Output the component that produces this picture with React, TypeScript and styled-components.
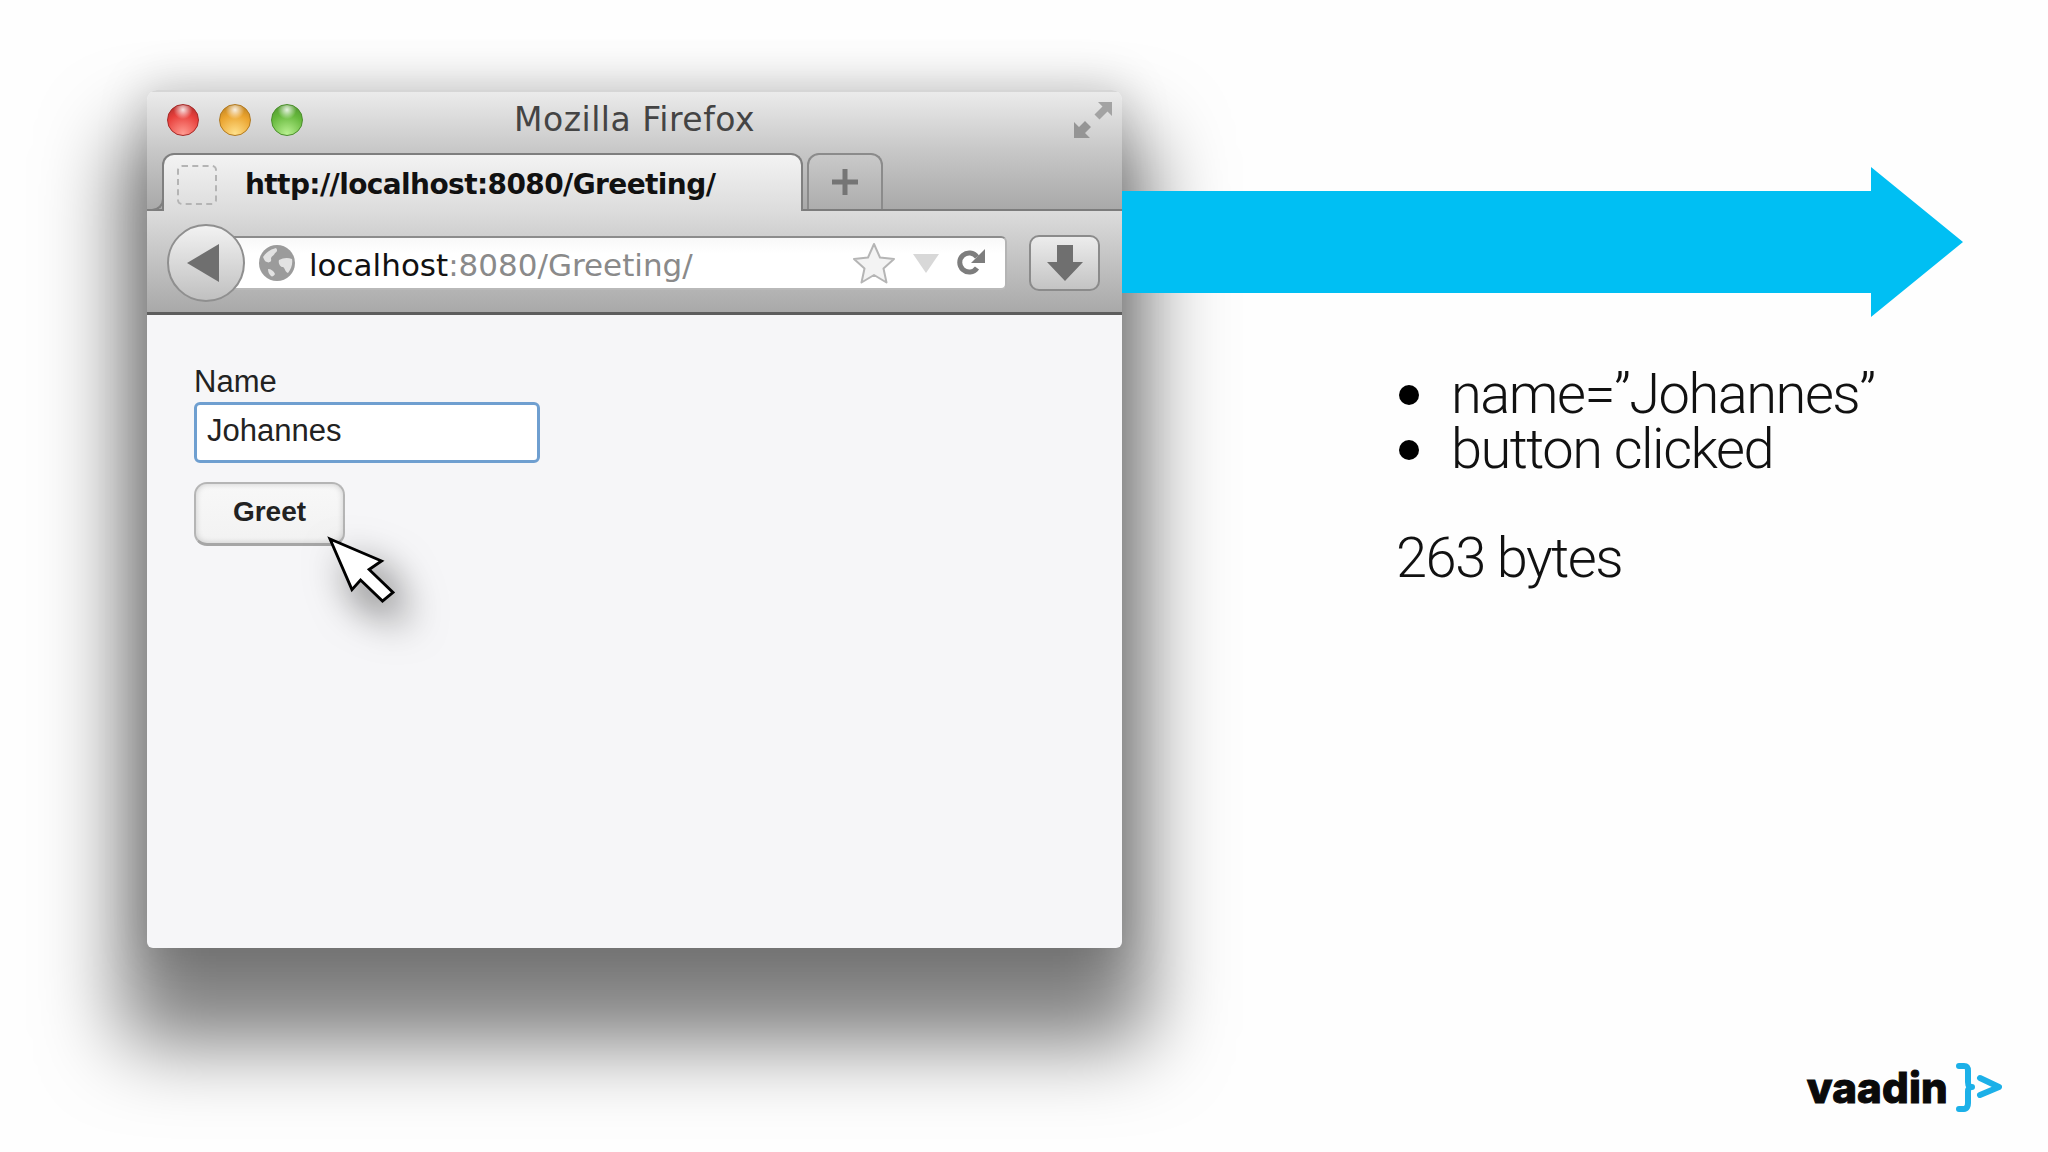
import styled, { createGlobalStyle } from "styled-components";

const GlobalStyle = createGlobalStyle`
  html, body {
    margin: 0;
    padding: 0;
    background: #fefefe;
    overflow: hidden;
  }
`;

const Page = styled.div`
  width: 2048px;
  height: 1152px;
  display: flex;
  padding-left: 147px;
  box-sizing: border-box;
`;

const Browser = styled.div`
  width: 975px;
  height: 858px;
  margin-top: 90px;
  flex: none;
  display: flex;
  flex-direction: column;
  border-radius: 10px 10px 6px 6px;
  background: #f6f6f8;
  box-shadow: 0 70px 80px 26px rgba(0, 0, 0, 0.5), 0 0 46px 6px rgba(0, 0, 0, 0.15);
  overflow: hidden;
`;

const TitleBar = styled.div`
  height: 63px;
  flex: none;
  display: grid;
  grid-template-columns: 1fr auto 1fr;
  align-items: center;
  padding: 0 20px 6px;
  box-sizing: border-box;
  background: linear-gradient(#ebebeb, #c6c6c6);
  border-top: 2px solid #d6d6d6;
`;

const Lights = styled.div`
  display: flex;
  gap: 20px;
`;

const Light = styled.span<{ $base: string; $dark: string; $glow: string }>`
  width: 32px;
  height: 32px;
  border-radius: 50%;
  box-sizing: border-box;
  border: 1px solid ${(props) => props.$dark};
  background:
    radial-gradient(circle at 50% 16%, rgba(255, 255, 255, 0.85) 0, rgba(255, 255, 255, 0) 32%),
    radial-gradient(circle at 50% 95%, ${(props) => props.$glow} 0, ${(props) => props.$base} 60%, ${(props) => props.$dark} 100%);
`;

const WindowTitle = styled.div`
  font-family: "DejaVu Sans", sans-serif;
  font-size: 33px;
  color: #444;
  letter-spacing: 0.5px;
`;

const ResizeIcon = styled.svg`
  width: 38px;
  height: 36px;
  justify-self: end;
  margin-right: -10px;
`;

const TabStrip = styled.div`
  height: 58px;
  flex: none;
  display: flex;
  align-items: flex-end;
  gap: 4px;
  padding-left: 15px;
  box-sizing: border-box;
  background: linear-gradient(#c6c6c6, #a9a9a9);
  border-bottom: 2px solid #7c7c7c;
`;

const ActiveTab = styled.div`
  width: 641px;
  height: 58px;
  margin-bottom: -2px;
  display: flex;
  align-items: center;
  gap: 28px;
  padding: 3px 0 0 13px;
  box-sizing: border-box;
  position: relative;
  border: 2px solid #7f7f7f;
  border-bottom: none;
  border-radius: 12px 12px 0 0;
  background: linear-gradient(#f3f3f3, #dcdcdc);
  z-index: 1;

  &::before {
    content: "";
    position: absolute;
    left: -17px;
    bottom: 0;
    width: 15px;
    height: 12px;
    border-right: 2px solid #7f7f7f;
    border-bottom: 2px solid #7f7f7f;
    border-radius: 0 0 12px 0;
  }
`;

const Favicon = styled.span`
  width: 40px;
  height: 40px;
  flex: none;
  box-sizing: border-box;
  border: 2px dashed #b4b4b4;
  border-radius: 5px;
`;

const TabLabel = styled.span`
  font-family: "DejaVu Sans", sans-serif;
  font-weight: 700;
  font-size: 28px;
  letter-spacing: -0.6px;
  color: #111;
  white-space: nowrap;
`;

const NewTab = styled.div`
  width: 76px;
  height: 56px;
  display: flex;
  align-items: center;
  justify-content: center;
  box-sizing: border-box;
  border: 2px solid #8b8b8b;
  border-bottom: none;
  border-radius: 12px 12px 0 0;
  background: linear-gradient(#c9c9c9, #adadad);
`;

const PlusIcon = styled.svg`
  width: 28px;
  height: 28px;
`;

const NavBar = styled.div`
  height: 104px;
  flex: none;
  display: flex;
  align-items: center;
  gap: 22px;
  padding: 3px 22px 0 20px;
  box-sizing: border-box;
  background: linear-gradient(#dcdcdc, #a9a9a9);
  border-bottom: 3px solid #5d5d5d;
`;

const UrlGroup = styled.div`
  display: flex;
  align-items: center;
  width: 840px;
`;

const BackButton = styled.div`
  width: 78px;
  height: 78px;
  flex: none;
  display: flex;
  align-items: center;
  justify-content: center;
  border-radius: 50%;
  box-sizing: border-box;
  border: 2px solid #8f8f8f;
  background: linear-gradient(#f2f2f2, #c0c0c0);
  position: relative;
  z-index: 1;
`;

const BackIcon = styled.svg`
  width: 32px;
  height: 38px;
  margin-right: 6px;
`;

const UrlBar = styled.div`
  flex: 1;
  height: 54px;
  margin-left: -12px;
  display: flex;
  align-items: center;
  padding: 0 19px 0 24px;
  box-sizing: border-box;
  border: 2px solid #8c8c8c;
  border-radius: 0 6px 6px 0;
  border-bottom-color: #b9b9b9;
  border-right-color: #b4b4b4;
  background: linear-gradient(#f8f8f8, #ffffff 30%);
`;

const Globe = styled.svg`
  width: 36px;
  height: 36px;
  flex: none;
  margin-right: 14px;
`;

const UrlText = styled.span`
  flex: 1;
  padding-top: 3px;
  font-family: "DejaVu Sans", sans-serif;
  font-size: 31px;
  color: #111;
  white-space: nowrap;
`;

const UrlRest = styled.span`
  color: #8a8a8a;
`;

const UrlIcons = styled.div`
  display: flex;
  align-items: center;
  gap: 17px;
`;

const DownloadButton = styled.div`
  width: 71px;
  height: 56px;
  flex: none;
  display: flex;
  align-items: center;
  justify-content: center;
  box-sizing: border-box;
  border: 2px solid #8b8b8b;
  border-radius: 10px;
  background: linear-gradient(#ececec, #c4c4c4);
`;

const Content = styled.div`
  flex: 1;
  position: relative;
  display: flex;
  flex-direction: column;
  align-items: flex-start;
  padding: 48px 0 0 47px;
`;

const FieldLabel = styled.label`
  font-family: "Liberation Sans", Arial, sans-serif;
  font-size: 31px;
  line-height: 38px;
  color: #222;
`;

const NameInput = styled.input`
  width: 346px;
  height: 61px;
  margin-top: 1px;
  padding: 0 10px 3px;
  box-sizing: border-box;
  font-family: "Liberation Sans", Arial, sans-serif;
  font-size: 31px;
  color: #222;
  background: #fff;
  border: 3px solid #6f9fd0;
  border-radius: 6px;
  outline: none;
`;

const GreetButton = styled.button`
  width: 151px;
  height: 64px;
  margin-top: 19px;
  padding: 0 0 4px;
  font-family: "Liberation Sans", Arial, sans-serif;
  font-weight: 700;
  font-size: 28px;
  color: #222;
  background: linear-gradient(#f8f8f8, #f2f2f2);
  border: 2px solid #b5b5b5;
  border-bottom: 3px solid #a6a6a6;
  border-radius: 13px;
  box-shadow: inset 0 0 6px rgba(0, 0, 0, 0.18);
`;

const Cursor = styled.svg`
  position: absolute;
  left: 183px;
  top: 224px;
  width: 63px;
  height: 63px;
  overflow: visible;
  filter: drop-shadow(14px 20px 20px rgba(0, 0, 0, 0.6));
`;

const Side = styled.div`
  flex: 1;
  display: flex;
  flex-direction: column;
  padding: 167px 46px 40px 0;
  min-width: 0;
`;

const BigArrow = styled.svg`
  width: 845px;
  height: 150px;
  flex: none;
`;

const Notes = styled.div`
  margin: 50px 0 0 274px;
  font-family: Roboto, "Liberation Sans", sans-serif;
  font-weight: 300;
  font-size: 56px;
  line-height: 55px;
  letter-spacing: -1.5px;
  color: #111;
`;

const BulletList = styled.ul`
  list-style: none;
  margin: 0 0 54px;
  padding: 0;
`;

const Bullet = styled.li`
  display: flex;
  align-items: center;
  white-space: nowrap;
`;

const Dot = styled.span`
  width: 20px;
  height: 20px;
  margin: 0 32px 0 3px;
  border-radius: 50%;
  background: #000;
  flex: none;
`;

const Logo = styled.div`
  margin-top: auto;
  align-self: flex-end;
  display: flex;
  align-items: center;
  gap: 8px;
`;

const LogoWord = styled.span`
  font-family: Inter, Roboto, sans-serif;
  font-weight: 800;
  font-size: 42px;
  line-height: 49px;
  letter-spacing: 0.2px;
  color: #0a0a0a;
  -webkit-text-stroke: 1px #0a0a0a;
`;

const LogoMark = styled.svg`
  width: 46px;
  height: 49px;
`;

export default function App() {
  return (
    <Page>
      <GlobalStyle />
      <Browser>
        <TitleBar>
          <Lights>
            <Light $base="#e8403c" $dark="#a62a28" $glow="#ff9a90" />
            <Light $base="#eaa32e" $dark="#b27a20" $glow="#ffe08a" />
            <Light $base="#66b83c" $dark="#4b8f2c" $glow="#b8f090" />
          </Lights>
          <WindowTitle>Mozilla Firefox</WindowTitle>
          <ResizeIcon viewBox="0 0 38 36">
            <path d="M24 0h14v14l-4.500-4.500-8 8-5-5 8-8z" fill="#a3a3a3" />
            <path d="M0 36V20l5 5 6-6 6 6-6 6 5 5z" fill="#959595" />
          </ResizeIcon>
        </TitleBar>
        <TabStrip>
          <ActiveTab>
            <Favicon />
            <TabLabel>http://localhost:8080/Greeting/</TabLabel>
          </ActiveTab>
          <NewTab>
            <PlusIcon viewBox="0 0 28 28">
              <path d="M11.500 1h5v10.500h10.500v5H16.500V27h-5V16.500H1v-5h10.500z" fill="#757575" />
            </PlusIcon>
          </NewTab>
        </TabStrip>
        <NavBar>
          <UrlGroup>
            <BackButton>
              <BackIcon viewBox="0 0 32 38">
                <path d="M32 0v38L0 19z" fill="#6f6f6f" />
              </BackIcon>
            </BackButton>
            <UrlBar>
              <Globe viewBox="0 0 36 36">
                <circle cx="18" cy="18" r="18" fill="#9b9b9b" />
                <path d="M4 12c4-6 9-8 13-9 2 2 1 4-1 5-1 3-4 3-4 6 1 3-2 4-4 3-2 0-3-3-4-5zM20 15c4-2 8-3 13-1 1 5-1 10-4 14-3-1-3-5-5-6-3 0-5-4-4-7zM9 24c3 0 6 2 7 5-1 2-3 3-4 2-2-2-3-4-3-7z" fill="#e2e2e2" />
              </Globe>
              <UrlText>
                localhost<UrlRest>:8080/Greeting/</UrlRest>
              </UrlText>
              <UrlIcons>
                <svg width="44" height="43" viewBox="0 0 44 43">
                  <path d="M22 2l6 13.500 14 1.500-10.500 9.500 3 14L22 33l-12.500 7.500 3-14L2 17l14-1.500z" fill="#f3f3f3" stroke="#b5b5b5" strokeWidth="2" strokeLinejoin="round" />
                </svg>
                <svg width="26" height="19" viewBox="0 0 26 19">
                  <path d="M0 0h26L13 19z" fill="#d8d8d8" />
                </svg>
                <svg width="30" height="30" viewBox="0 0 30 30">
                  <path d="M21 20a9.500 9.500 0 1 1 0-11" fill="none" stroke="#7d7d7d" strokeWidth="5" />
                  <path d="M29 1v14H15z" fill="#7d7d7d" />
                </svg>
              </UrlIcons>
            </UrlBar>
          </UrlGroup>
          <DownloadButton>
            <svg width="38" height="38" viewBox="0 0 38 38">
              <path d="M11 1h16v17h10L19 37 1 18h10z" fill="#6f6f6f" />
            </svg>
          </DownloadButton>
        </NavBar>
        <Content>
          <FieldLabel htmlFor="name">Name</FieldLabel>
          <NameInput id="name" value="Johannes" readOnly />
          <GreetButton type="button">Greet</GreetButton>
          <Cursor viewBox="0 0 66 66">
            <path d="M0 0l54 23-13 9 25 24-11 9-23-22-9 10z" fill="#fff" stroke="#000" strokeWidth="3" strokeLinejoin="miter" />
          </Cursor>
        </Content>
      </Browser>
      <Side>
        <BigArrow viewBox="0 0 845 150">
          <path d="M0 24h749V0l92 75-92 75v-24H0z" fill="#00bff3" />
        </BigArrow>
        <Notes>
          <BulletList>
            <Bullet>
              <Dot />
              name=”Johannes”
            </Bullet>
            <Bullet>
              <Dot />
              button clicked
            </Bullet>
          </BulletList>
          <div>263 bytes</div>
        </Notes>
        <Logo>
          <LogoWord>vaadin</LogoWord>
          <LogoMark viewBox="0 0 46 49">
            <path d="M3 3h5c3 0 4 2 4 5v11c0 3 1 5 4 5-3 0-4 2-4 5v11c0 3-1 6-4 6H3" fill="none" stroke="#1cb0e8" strokeWidth="6" strokeLinecap="round" strokeLinejoin="round" />
            <path d="M24 15l19 9-19 8" fill="none" stroke="#1cb0e8" strokeWidth="6" strokeLinecap="round" strokeLinejoin="round" />
          </LogoMark>
        </Logo>
      </Side>
    </Page>
  );
}
